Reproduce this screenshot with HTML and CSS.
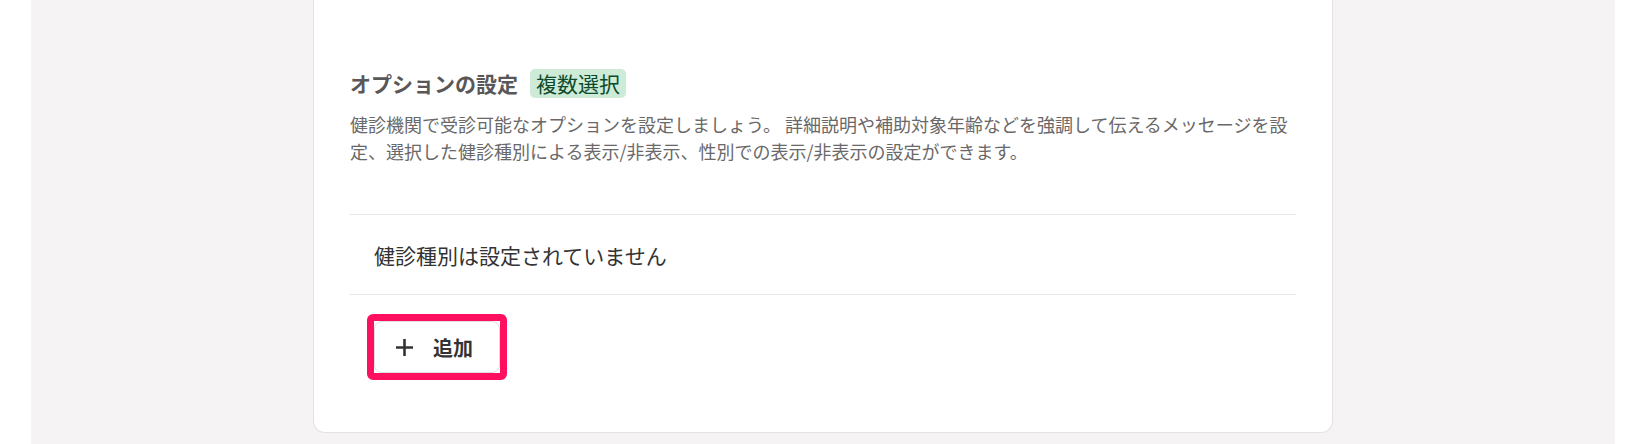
FILE: index.html
```html
<!DOCTYPE html>
<html lang="ja">
<head>
<meta charset="utf-8">
<title>オプションの設定</title>
<link rel="stylesheet" href="styles.css">
</head>
<body>
<div class="panel">
  <div class="card">
    <div class="heading">
      <h2 class="title">オプションの設定</h2>
      <span class="badge">複数選択</span>
    </div>
    <p class="desc">健診機関で受診可能なオプションを設定しましょう。 詳細説明や補助対象年齢などを強調して伝えるメッセージを設定、選択した健診種別による表示/非表示、性別での表示/非表示の設定ができます。</p>
    <div class="list">
      <div class="empty">健診種別は設定されていません</div>
    </div>
    <div class="actions">
      <div class="highlight">
        <button class="add-btn" type="button">
          <svg class="plus" width="19" height="19" viewBox="0 0 19 19" aria-hidden="true">
            <path d="M9.5 1v17M1 9.5h17" stroke="#333" stroke-width="2.6" fill="none"/>
          </svg>
          <span>追加</span>
        </button>
      </div>
    </div>
  </div>
</div>
</body>
</html>
```
FILE: styles.css
```css
html, body {
  margin: 0;
  padding: 0;
  background: #ffffff;
}
body {
  font-family: "Noto Sans CJK JP", "Noto Sans", sans-serif;
  height: 444px;
  overflow: hidden;
}
.panel {
  margin-left: 31px;
  width: 1584px;
  height: 444px;
  background: #f5f3f4;
  box-sizing: border-box;
  padding-left: 282px;
}
.card {
  width: 1020px;
  height: 433px;
  box-sizing: border-box;
  background: #ffffff;
  border: 1px solid #e4e2e3;
  border-top: none;
  border-radius: 0 0 12px 12px;
  padding: 69px 36px 0 36px;
}
.heading {
  display: flex;
  align-items: center;
  gap: 12px;
  height: 29px;
}
.title {
  margin: 0;
  font-size: 21px;
  font-weight: 700;
  color: #595757;
  line-height: 29px;
}
.badge {
  display: inline-block;
  background: #cdebd7;
  color: #0d4a2b;
  font-size: 21px;
  line-height: 29px;
  height: 29px;
  padding: 0 6px;
  border-radius: 5px;
}
.desc {
  margin: 13px 0 0 0;
  font-size: 18px;
  line-height: 27px;
  color: #6a6868;
}
.list {
  margin-top: 49px;
  border-top: 1px solid #e6e6e6;
  border-bottom: 1px solid #e6e6e6;
}
.empty {
  height: 79px;
  display: flex;
  align-items: center;
  padding-left: 24px;
  font-size: 21px;
  color: #333333;
}
.actions {
  padding-top: 19px;
  padding-left: 17px;
}
.highlight {
  display: inline-block;
  border: 7px solid #ff0f5f;
  border-radius: 6px;
}
.add-btn {
  display: flex;
  align-items: center;
  gap: 19px;
  width: 126px;
  height: 52px;
  box-sizing: border-box;
  padding: 0 0 0 20px;
  background: #ffffff;
  border: 1px solid #dddddd;
  border-radius: 8px;
  font-family: "Noto Sans CJK JP", "Noto Sans", sans-serif;
  font-size: 20px;
  font-weight: 700;
  color: #333333;
  cursor: pointer;
}
.plus {
  display: block;
  flex: none;
}
```
